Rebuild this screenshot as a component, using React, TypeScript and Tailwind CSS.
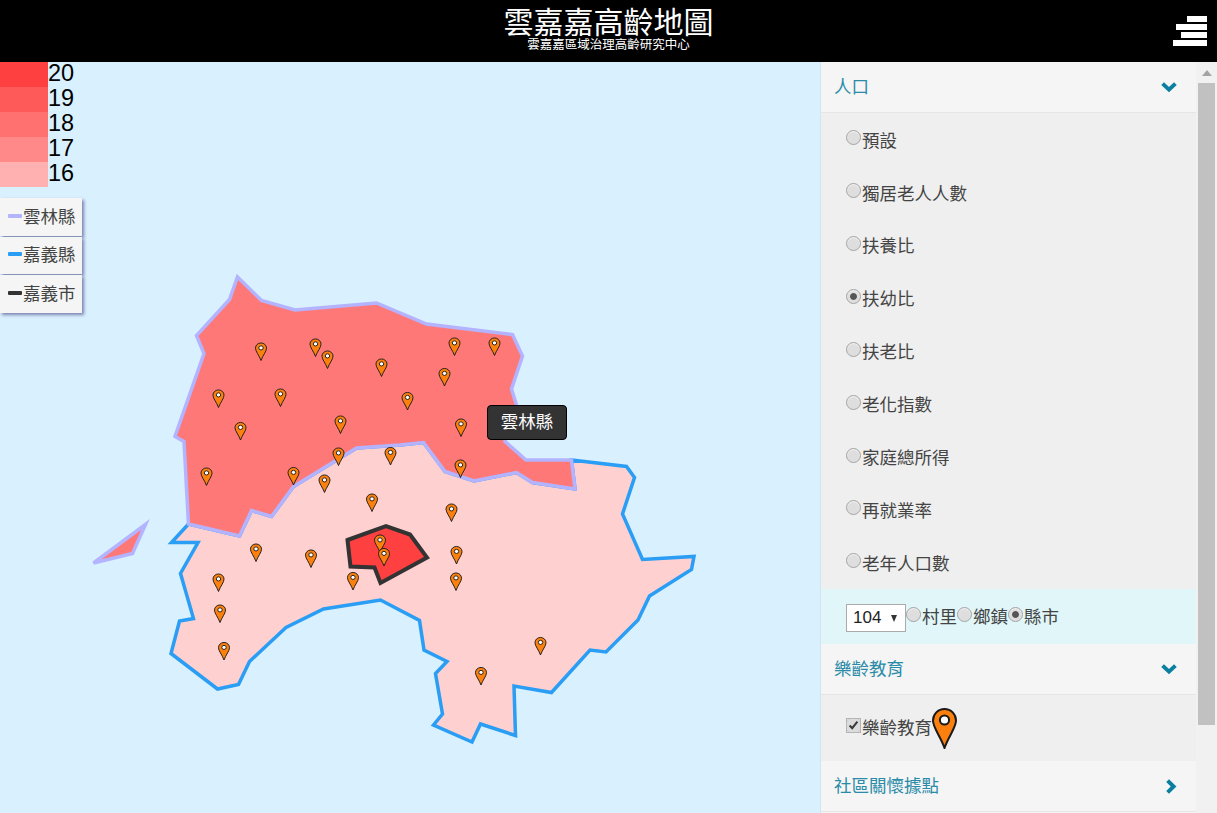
const cjk = "font-['Liberation_Sans','Noto_Sans_CJK_TC',sans-serif]";

const scale = [
  { value: 20, color: "bg-[#ff4040]" },
  { value: 19, color: "bg-[#ff5a5a]" },
  { value: 18, color: "bg-[#ff7070]" },
  { value: 17, color: "bg-[#ff8888]" },
  { value: 16, color: "bg-[#ffb0b0]" },
];

const layers = [
  { name: "雲林縣", color: "bg-[#b3b3ff]" },
  { name: "嘉義縣", color: "bg-[#2a9df4]" },
  { name: "嘉義市", color: "bg-[#333333]" },
];

const populationOptions = [
  { label: "預設" },
  { label: "獨居老人人數" },
  { label: "扶養比" },
  { label: "扶幼比", checked: true },
  { label: "扶老比" },
  { label: "老化指數" },
  { label: "家庭總所得" },
  { label: "再就業率" },
  { label: "老年人口數" },
];

// map outlines, in page coordinates minus the 62px header
const shift = (pts: number[][]) => pts.map(([x, y]) => `${x},${y - 62}`).join(" ");

const yunlin = shift([
  [237.5, 277], [261.5, 300.5], [295, 310], [376.5, 303], [426.5, 324], [512.5, 334.5], [522.5, 356],
  [511.5, 389], [516.5, 405], [505, 441.5], [526, 460], [571.5, 460], [575, 489], [532.5, 482.5],
  [516.5, 472.5], [474, 481], [445, 471.5], [423.5, 442.5], [400, 445], [356.5, 448], [293.5, 486.5],
  [271.5, 516.5], [251.5, 510.5], [239.5, 536], [188.5, 524], [184, 441.5], [175, 436.5], [204, 353.5],
  [196.5, 335.5], [229.5, 299.5],
]);

const island = shift([[145.5, 524.5], [132.5, 553.5], [93.5, 563]]);

const chiayiCounty = shift([
  [571.5, 460], [626.5, 466.5], [634.5, 477.5], [622.5, 514], [642.5, 559.5], [694, 556.5], [691.5, 569.5],
  [649.5, 596], [638, 620], [606, 652], [590, 650], [551.5, 692.5], [514, 686], [515.5, 735.5],
  [480.5, 724], [472, 742], [433.5, 725], [442.5, 714], [435.5, 673.5], [447, 661.5], [424, 650],
  [419.5, 620.5], [380.5, 600], [323.5, 609], [286, 627.5], [249.5, 661.5], [238.5, 684.5], [217.5, 689],
  [171, 653.5], [179.5, 621], [193.5, 618.5], [180.5, 573.5], [198, 542.5], [171.5, 542.5], [188.5, 524],
  [239.5, 536], [251.5, 510.5], [271.5, 516.5], [293.5, 486.5], [356.5, 448], [400, 445], [423.5, 442.5],
  [445, 471.5], [474, 481], [516.5, 472.5], [532.5, 482.5], [575, 489],
]);

const chiayiCity = shift([
  [347.5, 540], [386, 526], [410, 534.5], [427, 557.5], [380.5, 583], [374.5, 567.5], [350.5, 566.5],
]);

// marker tips
const pins = [
  [261, 360.5], [315.5, 356.5], [327.5, 368.5], [381.5, 376.5], [218.5, 407.5], [280.5, 406.5], [240.5, 440],
  [340.5, 433.5], [206.5, 485.5], [293.5, 485], [338.5, 465.5], [390.5, 465], [324.5, 492.5], [372, 511.5],
  [454.5, 355.5], [494.5, 355.5], [444.5, 386], [407.5, 410], [461, 436.5], [460.5, 477.5], [451.5, 521.5],
  [456.5, 564], [456, 590.5], [256, 561.5], [311, 567.5], [353, 590], [380, 552.5], [384, 566], [218.5, 591.5],
  [220, 622.5], [224, 660], [540.5, 655], [481, 685],
];

function PinShape() {
  return (
    <>
      <path
        d="M12.5 1C6 1 1 6.2 1 12.6 1 20 8.5 28 12.5 40 16.5 28 24 20 24 12.6 24 6.2 19 1 12.5 1Z"
        fill="#fb800e"
        stroke="#1a1a1a"
        strokeWidth="2"
      />
      <circle cx="12.5" cy="12" r="4.6" fill="#fff" stroke="#1a1a1a" strokeWidth="2" />
    </>
  );
}

function MapView() {
  return (
    <div className="relative flex-1 h-full bg-[#d9f0ff]">
      <svg viewBox="0 0 820 751" className="block w-full h-full">
        <polygon points={chiayiCounty} fill="#ffd0d0" stroke="#2a9df4" strokeWidth="3.5" />
        <polygon points={yunlin} fill="#ff7878" stroke="#b3b3ff" strokeWidth="3.5" />
        <polygon points={island} fill="#ff7878" stroke="#b3b3ff" strokeWidth="3.5" />
        <polygon points={chiayiCity} fill="#ff4040" stroke="#333333" strokeWidth="4" />
        {pins.map(([x, y], i) => (
          <g key={i} transform={`translate(${x - 6} ${y - 62 - 18}) scale(0.48 0.45)`}>
            <PinShape />
          </g>
        ))}
      </svg>

      <div className="absolute top-0 left-0 w-[80px]">
        {scale.map((s) => (
          <div key={s.value} className="flex h-[25px] items-start">
            <div className={`w-[48px] h-full ${s.color}`} />
            <span className="text-[23.5px] leading-[23px] text-black">{s.value}</span>
          </div>
        ))}
      </div>

      <div className="absolute top-[136px] left-0 flex flex-col gap-[1px] w-[82px]">
        {layers.map((l) => (
          <div
            key={l.name}
            className="flex h-[37.5px] items-center gap-[1px] pl-[8px] bg-[#f5f5f5] text-[17.5px] text-[#444] shadow-[2px_2px_3px_rgba(60,60,120,0.6)]"
          >
            <span className={`block w-[14px] h-[4px] rounded-[1px] -translate-y-[1px] ${l.color}`} />
            <span>{l.name}</span>
          </div>
        ))}
      </div>

      <div className="absolute left-[487px] top-[343px] flex h-[35px] w-[80px] items-center justify-center rounded-[4px] border border-black bg-[#333] text-[17.5px] text-white">
        雲林縣
      </div>
    </div>
  );
}

function PanelHeader({ title, open }: { title: string; open: boolean }) {
  return (
    <div className="flex h-[50px] shrink-0 items-center justify-between bg-[#f5f5f5] border-b border-[#e5e5e5] pl-[13px] pr-[19px] box-content">
      <span className="text-[17.5px] text-[#2a8ba8]">{title}</span>
      {open ? (
        <svg viewBox="0 0 16 12" className="block w-[16px] h-[12px]">
          <polyline points="1.6,2.6 8,8.6 14.4,2.6" fill="none" stroke="#0b7f9f" strokeWidth="4" />
        </svg>
      ) : (
        <svg viewBox="0 0 12 15" className="block w-[12px] h-[15px]">
          <polyline points="2.6,1.6 8.6,7.5 2.6,13.4" fill="none" stroke="#0b7f9f" strokeWidth="4" />
        </svg>
      )}
    </div>
  );
}

function Radio({ name, checked }: { name: string; checked?: boolean }) {
  return (
    <input
      type="radio"
      name={name}
      defaultChecked={checked}
      className="appearance-none w-[15px] h-[15px] shrink-0 -translate-y-[3px] rounded-full border border-[#a5a5a5] bg-[#dedede] shadow-[inset_0_1px_1px_#f4f4f4] checked:bg-[radial-gradient(circle,#555_0,#555_32%,#dedede_42%)]"
    />
  );
}

function Sidebar() {
  return (
    <div className="flex w-[397px] h-full border-l border-[#d0e4f2] bg-[#f5f5f5]">
      <div className="flex flex-col w-[375px] overflow-hidden">
        <PanelHeader title="人口" open />
        {populationOptions.map((o) => (
          <label key={o.label} className="flex h-[52.9px] shrink-0 items-center bg-[#efefef] pl-[25px] pt-[2.6px] text-[17.5px] text-[#444]">
            <Radio name="population" checked={o.checked} />
            <span className="pl-[1px]">{o.label}</span>
          </label>
        ))}
        <div className="flex h-[55px] shrink-0 items-center bg-[#e0f6f9] pl-[25px] pt-[2px] text-[17.5px] text-[#444]">
          <div className="relative h-[28px] w-[60px] shrink-0">
            <select className="appearance-none h-full w-full border border-[#aaa] bg-white pl-[6px] text-[17px] text-[#222]">
              <option>104</option>
            </select>
            <span className="absolute right-[9px] top-[11px] w-0 h-0 border-x-[3.5px] border-x-transparent border-t-[7px] border-t-[#333]" />
          </div>
          <Radio name="level" />
          <span className="pl-[1px]">村里</span>
          <Radio name="level" />
          <span className="pl-[1px]">鄉鎮</span>
          <Radio name="level" checked />
          <span className="pl-[1px]">縣市</span>
        </div>
        <PanelHeader title="樂齡教育" open />
        <label className="flex h-[66px] shrink-0 items-center bg-[#efefef] pl-[25px] text-[17.5px] text-[#444]">
          <input
            type="checkbox"
            defaultChecked
            className="w-[13px] h-[13px] ml-[1px] mr-[1px] shrink-0 -translate-y-[3px] rounded-[2px] accent-[#dcdcdc] shadow-[0_0_0_1px_#b5b5b5]"
          />
          <span className="pl-[1px]">樂齡教育</span>
          <svg viewBox="0 0 25 41" className="block w-[25px] h-[41px]">
            <PinShape />
          </svg>
        </label>
        <PanelHeader title="社區關懷據點" open={false} />
      </div>
      <div className="flex flex-col w-[21px] bg-[#f1f1f1]">
        <div className="flex h-[21px] shrink-0 items-center justify-center">
          <div className="w-0 h-0 border-x-[5px] border-x-transparent border-b-[6px] border-b-[#a3a3a3]" />
        </div>
        <div className="ml-[2px] w-[17px] h-[642px] bg-[#c1c1c1]" />
      </div>
    </div>
  );
}

export default function App() {
  return (
    <div className={`flex flex-col h-screen w-full overflow-hidden bg-white ${cjk}`}>
      <header className="relative flex h-[62px] shrink-0 flex-col items-center bg-black text-white">
        <h1 className="pt-[6px] text-[30px] leading-[34px] font-normal">雲嘉嘉高齡地圖</h1>
        <p className="-mt-[2px] text-[12.5px] leading-[14px]">雲嘉嘉區域治理高齡研究中心</p>
        <div className="absolute right-[10px] top-[16px] flex flex-col items-end gap-[2.5px]">
          <span className="block h-[5.5px] w-[20px] bg-white" />
          <span className="block h-[5.5px] w-[31px] bg-white" />
          <span className="block h-[5.5px] w-[26px] bg-white" />
          <span className="block h-[5.5px] w-[34px] bg-white" />
        </div>
      </header>
      <main className="flex flex-1 min-h-0">
        <MapView />
        <Sidebar />
      </main>
    </div>
  );
}
